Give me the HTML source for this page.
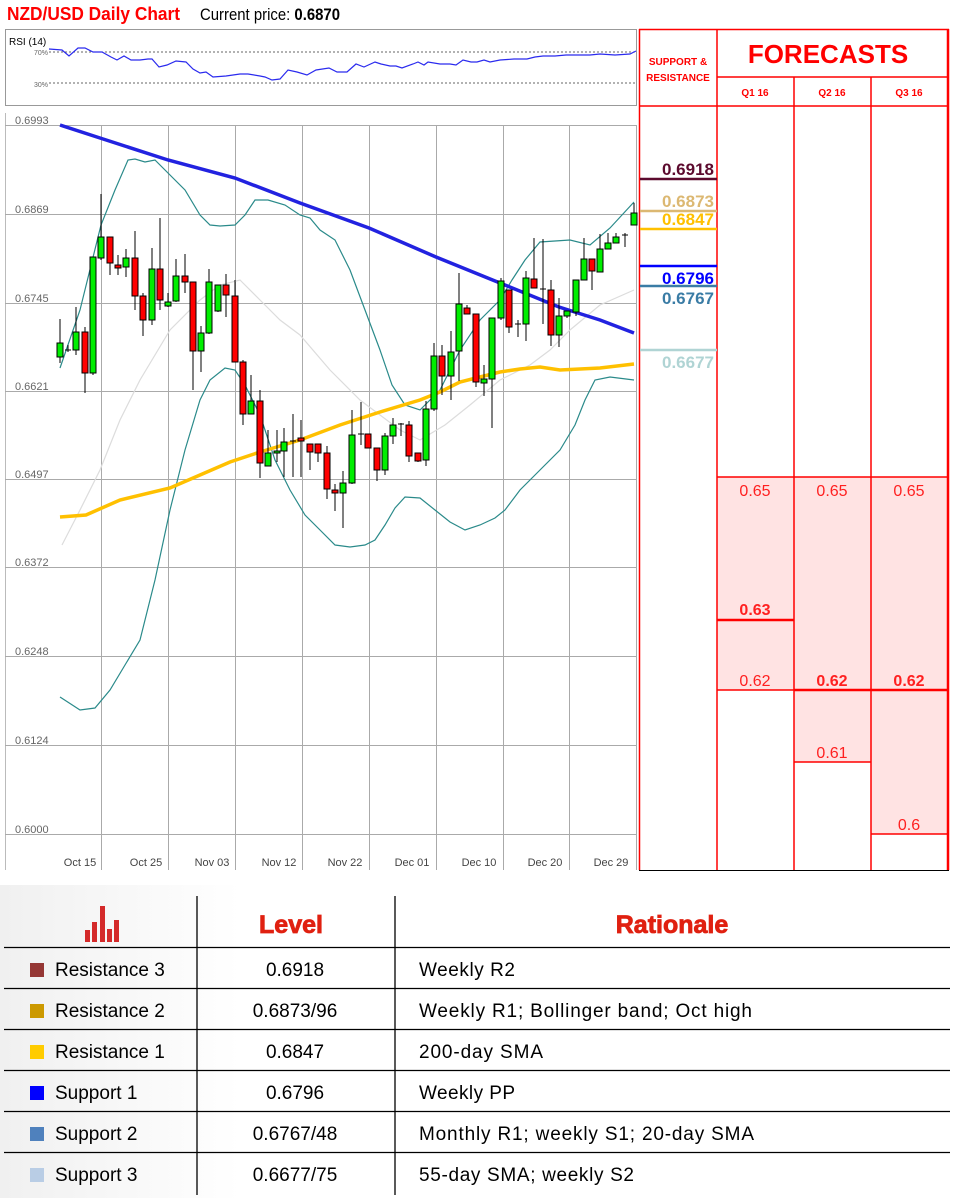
<!DOCTYPE html>
<html><head><meta charset="utf-8">
<style>
html,body{margin:0;padding:0;background:#fff;}
svg{display:block;font-family:"Liberation Sans",sans-serif;}
</style></head>
<body>
<svg width="960" height="1198" viewBox="0 0 960 1198" xmlns="http://www.w3.org/2000/svg">
<defs>
<linearGradient id="bg" x1="0" x2="1" y1="0" y2="0">
<stop offset="0" stop-color="#f0f0f0"/><stop offset="0.25" stop-color="#fff"/><stop offset="1" stop-color="#fff"/>
</linearGradient>
</defs>
<rect width="960" height="1198" fill="#fff"/>
<!-- Title -->
<text x="7" y="20" font-size="18" font-weight="bold" fill="#ff0000" textLength="173" lengthAdjust="spacingAndGlyphs">NZD/USD Daily Chart</text>
<text x="200" y="20" font-size="17" fill="#000" textLength="140" lengthAdjust="spacingAndGlyphs">Current price: <tspan font-weight="bold">0.6870</tspan></text>

<!-- RSI panel -->
<rect x="5.5" y="29.5" width="631" height="76" fill="#fff" stroke="#999"/>
<text x="9" y="45" font-size="10" fill="#000">RSI (14)</text>
<text x="34" y="55" font-size="7" fill="#666">70%</text>
<text x="34" y="87" font-size="7" fill="#666">30%</text>
<line x1="49" y1="52" x2="636" y2="52" stroke="#666" stroke-dasharray="2,2"/>
<line x1="49" y1="83" x2="636" y2="83" stroke="#666" stroke-dasharray="2,2"/>
<polyline fill="none" stroke="#2a2aee" stroke-width="1.2" points="49,49 62,50 69,56 78,48 85,48 93,52 102,52 111,57 117,60 124,56 131,60 140,60 148,59 152,59 159,67 167,65 176,61 186,62 193,69 200,73 206,72 213,77 226,76 240,74 248,74 260,76 265,77 272,80 280,79 288,70 297,72 307,75 316,70 329,68 337,72 347,72 356,64 364,67 375,62 381,64 390,66 396,66 402,68 413,64 418,62 424,65 428,62 440,64 450,64 456,65 463,60 471,62 477,62 484,60 490,62 500,60 514,59 527,59 535,57 543,56 555,56 566,55 576,55 590,55 600,54 615,55 630,54 636,51"/>

<!-- Main chart frame -->
<line x1="5.5" y1="113" x2="5.5" y2="870" stroke="#bbb"/>
<g stroke="#aaa" stroke-width="1">
<line x1="5" y1="125.5" x2="636" y2="125.5"/>
<line x1="5" y1="214.5" x2="636" y2="214.5"/>
<line x1="5" y1="303.5" x2="636" y2="303.5"/>
<line x1="5" y1="391.5" x2="636" y2="391.5"/>
<line x1="5" y1="479.5" x2="636" y2="479.5"/>
<line x1="5" y1="567.5" x2="636" y2="567.5"/>
<line x1="5" y1="656.5" x2="636" y2="656.5"/>
<line x1="5" y1="745.5" x2="636" y2="745.5"/>
<line x1="5" y1="834.5" x2="636" y2="834.5"/>
<line x1="101.5" y1="125" x2="101.5" y2="870"/>
<line x1="168.5" y1="125" x2="168.5" y2="870"/>
<line x1="235.5" y1="125" x2="235.5" y2="870"/>
<line x1="302.5" y1="125" x2="302.5" y2="870"/>
<line x1="369.5" y1="125" x2="369.5" y2="870"/>
<line x1="436.5" y1="125" x2="436.5" y2="870"/>
<line x1="503.5" y1="125" x2="503.5" y2="870"/>
<line x1="569.5" y1="125" x2="569.5" y2="870"/>
<line x1="636.5" y1="125" x2="636.5" y2="870"/>
</g>
<g font-size="11" fill="#666">
<text x="15" y="124">0.6993</text>
<text x="15" y="213">0.6869</text>
<text x="15" y="302">0.6745</text>
<text x="15" y="390">0.6621</text>
<text x="15" y="478">0.6497</text>
<text x="15" y="566">0.6372</text>
<text x="15" y="655">0.6248</text>
<text x="15" y="744">0.6124</text>
<text x="15" y="833">0.6000</text>
</g>
<g font-size="11" fill="#444" text-anchor="middle">
<text x="80" y="866">Oct 15</text>
<text x="146" y="866">Oct 25</text>
<text x="212" y="866">Nov 03</text>
<text x="279" y="866">Nov 12</text>
<text x="345" y="866">Nov 22</text>
<text x="412" y="866">Dec 01</text>
<text x="479" y="866">Dec 10</text>
<text x="545" y="866">Dec 20</text>
<text x="611" y="866">Dec 29</text>
</g>

<!-- Lines -->
<polyline fill="none" stroke="#dcdcdc" stroke-width="1.2" points="62,545 80,510 100,470 120,420 140,380 170,330 200,300 220,285 240,280 260,300 280,320 300,335 330,370 360,400 380,415 400,430 420,440 445,425 470,405 500,380 530,365 550,350 570,330 600,305 634,290"/>
<polyline fill="none" stroke="#2a8a8a" stroke-width="1.2" points="60,368 80,310 101,225 115,190 128,160 135,159 145,162 155,160 170,175 185,190 200,215 210,225 220,226 235,225 245,215 255,200 268,200 285,205 300,215 310,218 320,230 335,240 350,270 365,310 380,350 392,385 405,405 420,410 440,390 460,350 480,320 500,300 512,280 525,260 540,242 570,240 590,245 610,228 634,202"/>
<polyline fill="none" stroke="#2a8a8a" stroke-width="1.2" points="60,697 80,710 95,708 110,690 125,665 140,640 155,580 170,510 185,450 200,400 210,380 225,368 235,370 245,385 260,415 275,460 290,490 305,515 320,530 335,545 350,547 365,545 375,540 385,525 395,508 405,497 420,498 435,510 450,522 465,530 480,525 495,518 505,510 520,490 540,470 560,450 575,425 585,400 595,380 610,377 634,380"/>
<polyline fill="none" stroke="#ffc000" stroke-width="3.5" points="60,517 86,515 120,500 170,488 200,475 230,462 260,452 300,440 340,425 380,412 420,400 440,392 460,382 480,377 500,372 520,369 540,367 560,370 580,369 600,368 634,364"/>
<polyline fill="none" stroke="#2222e0" stroke-width="3.5" points="60,125 100,138 168,160 235,178 300,203 369,228 436,257 500,283 559,307 600,320 634,333"/>

<!-- Candles -->
<g stroke="#000" stroke-width="1">
<line x1="60" y1="319" x2="60" y2="363"/><rect x="57" y="343" width="6" height="14" fill="#00ee00"/>
<line x1="68" y1="345" x2="68" y2="352"/><line x1="65" y1="350" x2="71" y2="350"/>
<line x1="76" y1="307" x2="76" y2="355"/><rect x="73" y="332" width="6" height="18" fill="#00ee00"/>
<line x1="85" y1="327" x2="85" y2="393"/><rect x="82" y="332" width="6" height="41" fill="#ff0000"/>
<line x1="93" y1="257" x2="93" y2="375"/><rect x="90" y="257" width="6" height="116" fill="#00ee00"/>
<line x1="101" y1="194" x2="101" y2="260"/><rect x="98" y="237" width="6" height="21" fill="#00ee00"/>
<line x1="110" y1="237" x2="110" y2="275"/><rect x="107" y="237" width="6" height="26" fill="#ff0000"/>
<line x1="118" y1="255" x2="118" y2="275"/><rect x="115" y="265" width="6" height="3" fill="#ff0000"/>
<line x1="126" y1="249" x2="126" y2="277"/><rect x="123" y="258" width="6" height="9" fill="#00ee00"/>
<line x1="135" y1="231" x2="135" y2="310"/><rect x="132" y="258" width="6" height="38" fill="#ff0000"/>
<line x1="143" y1="293" x2="143" y2="336"/><rect x="140" y="296" width="6" height="24" fill="#ff0000"/>
<line x1="152" y1="248" x2="152" y2="325"/><rect x="149" y="269" width="6" height="51" fill="#00ee00"/>
<line x1="160" y1="218" x2="160" y2="310"/><rect x="157" y="269" width="6" height="31" fill="#ff0000"/>
<line x1="168" y1="293" x2="168" y2="307"/><rect x="165" y="302" width="6" height="4" fill="#00ee00"/>
<line x1="176" y1="259" x2="176" y2="302"/><rect x="173" y="276" width="6" height="25" fill="#00ee00"/>
<line x1="185" y1="254" x2="185" y2="293"/><rect x="182" y="276" width="6" height="6" fill="#ff0000"/>
<line x1="193" y1="282" x2="193" y2="390"/><rect x="190" y="282" width="6" height="69" fill="#ff0000"/>
<line x1="201" y1="326" x2="201" y2="372"/><rect x="198" y="333" width="6" height="18" fill="#00ee00"/>
<line x1="209" y1="269" x2="209" y2="334"/><rect x="206" y="282" width="6" height="51" fill="#00ee00"/>
<line x1="218" y1="285" x2="218" y2="312"/><rect x="215" y="285" width="6" height="26" fill="#00ee00"/>
<line x1="226" y1="274" x2="226" y2="317"/><rect x="223" y="285" width="6" height="10" fill="#ff0000"/>
<line x1="235" y1="280" x2="235" y2="362"/><rect x="232" y="296" width="6" height="66" fill="#ff0000"/>
<line x1="243" y1="360" x2="243" y2="425"/><rect x="240" y="362" width="6" height="52" fill="#ff0000"/>
<line x1="251" y1="375" x2="251" y2="414"/><rect x="248" y="401" width="6" height="13" fill="#00ee00"/>
<line x1="260" y1="390" x2="260" y2="478"/><rect x="257" y="401" width="6" height="62" fill="#ff0000"/>
<line x1="268" y1="430" x2="268" y2="466"/><rect x="265" y="453" width="6" height="13" fill="#00ee00"/>
<line x1="277" y1="430" x2="277" y2="462"/><rect x="274" y="451" width="6" height="2" fill="#00ee00"/>
<line x1="284" y1="428" x2="284" y2="477"/><rect x="281" y="442" width="6" height="9" fill="#00ee00"/>
<line x1="293" y1="414" x2="293" y2="477"/><line x1="290" y1="441" x2="296" y2="441"/>
<line x1="301" y1="420" x2="301" y2="477"/><rect x="298" y="438" width="6" height="3" fill="#ff0000"/>
<line x1="310" y1="444" x2="310" y2="470"/><rect x="307" y="444" width="6" height="8" fill="#ff0000"/>
<line x1="318" y1="444" x2="318" y2="462"/><rect x="315" y="444" width="6" height="9" fill="#ff0000"/>
<line x1="327" y1="446" x2="327" y2="499"/><rect x="324" y="453" width="6" height="36" fill="#ff0000"/>
<line x1="335" y1="484" x2="335" y2="511"/><rect x="332" y="490" width="6" height="3" fill="#ff0000"/>
<line x1="343" y1="471" x2="343" y2="528"/><rect x="340" y="483" width="6" height="10" fill="#00ee00"/>
<line x1="352" y1="410" x2="352" y2="484"/><rect x="349" y="435" width="6" height="48" fill="#00ee00"/>
<line x1="361" y1="402" x2="361" y2="445"/><line x1="358" y1="434" x2="364" y2="434"/>
<line x1="368" y1="434" x2="368" y2="448"/><rect x="365" y="434" width="6" height="14" fill="#ff0000"/>
<line x1="377" y1="448" x2="377" y2="481"/><rect x="374" y="448" width="6" height="22" fill="#ff0000"/>
<line x1="385" y1="433" x2="385" y2="475"/><rect x="382" y="436" width="6" height="34" fill="#00ee00"/>
<line x1="393" y1="418" x2="393" y2="444"/><rect x="390" y="425" width="6" height="11" fill="#00ee00"/>
<line x1="401" y1="423" x2="401" y2="436"/><line x1="398" y1="424" x2="404" y2="424"/>
<line x1="409" y1="421" x2="409" y2="462"/><rect x="406" y="425" width="6" height="31" fill="#ff0000"/>
<line x1="418" y1="453" x2="418" y2="462"/><rect x="415" y="453" width="6" height="8" fill="#ff0000"/>
<line x1="426" y1="401" x2="426" y2="466"/><rect x="423" y="409" width="6" height="51" fill="#00ee00"/>
<line x1="434" y1="343" x2="434" y2="411"/><rect x="431" y="356" width="6" height="53" fill="#00ee00"/>
<line x1="442" y1="345" x2="442" y2="395"/><rect x="439" y="356" width="6" height="20" fill="#ff0000"/>
<line x1="451" y1="331" x2="451" y2="400"/><rect x="448" y="352" width="6" height="24" fill="#00ee00"/>
<line x1="459" y1="273" x2="459" y2="381"/><rect x="456" y="304" width="6" height="47" fill="#00ee00"/>
<line x1="467" y1="305" x2="467" y2="314"/><rect x="464" y="308" width="6" height="6" fill="#ff0000"/>
<line x1="476" y1="314" x2="476" y2="387"/><rect x="473" y="314" width="6" height="68" fill="#ff0000"/>
<line x1="484" y1="365" x2="484" y2="396"/><rect x="481" y="379" width="6" height="4" fill="#00ee00"/>
<line x1="492" y1="318" x2="492" y2="428"/><rect x="489" y="318" width="6" height="61" fill="#00ee00"/>
<line x1="501" y1="278" x2="501" y2="320"/><rect x="498" y="281" width="6" height="37" fill="#00ee00"/>
<line x1="509" y1="290" x2="509" y2="333"/><rect x="506" y="290" width="6" height="37" fill="#ff0000"/>
<line x1="518" y1="320" x2="518" y2="337"/><line x1="515" y1="324" x2="521" y2="324"/>
<line x1="526" y1="271" x2="526" y2="341"/><rect x="523" y="278" width="6" height="46" fill="#00ee00"/>
<line x1="534" y1="238" x2="534" y2="288"/><rect x="531" y="279" width="6" height="9" fill="#ff0000"/>
<line x1="543" y1="239" x2="543" y2="324"/><line x1="540" y1="289" x2="546" y2="289"/>
<line x1="551" y1="280" x2="551" y2="346"/><rect x="548" y="290" width="6" height="45" fill="#ff0000"/>
<line x1="559" y1="298" x2="559" y2="347"/><rect x="556" y="316" width="6" height="19" fill="#00ee00"/>
<line x1="567" y1="311" x2="567" y2="318"/><rect x="564" y="311" width="6" height="5" fill="#00ee00"/>
<line x1="576" y1="280" x2="576" y2="316"/><rect x="573" y="280" width="6" height="32" fill="#00ee00"/>
<line x1="584" y1="238" x2="584" y2="280"/><rect x="581" y="259" width="6" height="21" fill="#00ee00"/>
<line x1="592" y1="259" x2="592" y2="290"/><rect x="589" y="259" width="6" height="12" fill="#ff0000"/>
<line x1="600" y1="234" x2="600" y2="272"/><rect x="597" y="249" width="6" height="23" fill="#00ee00"/>
<line x1="608" y1="233" x2="608" y2="249"/><rect x="605" y="243" width="6" height="6" fill="#00ee00"/>
<line x1="616" y1="233" x2="616" y2="243"/><rect x="613" y="237" width="6" height="6" fill="#00ee00"/>
<line x1="625" y1="233" x2="625" y2="247"/><line x1="622" y1="235" x2="628" y2="235"/>
<line x1="634" y1="203" x2="634" y2="225"/><rect x="631" y="213" width="6" height="12" fill="#00ee00"/>
</g>

<!-- Right panel -->
<g stroke="#ff0000" stroke-width="1.5" fill="none">
<rect x="717" y="477" width="77" height="213" fill="#ffe3e3" stroke="none"/>
<rect x="794" y="477" width="77" height="285" fill="#ffe3e3" stroke="none"/>
<rect x="871" y="477" width="77" height="357" fill="#ffe3e3" stroke="none"/>
<line x1="639" y1="29.5" x2="949" y2="29.5"/>
<line x1="639.5" y1="29" x2="639.5" y2="870"/>
<line x1="717" y1="29" x2="717" y2="870"/>
<line x1="794" y1="77" x2="794" y2="870"/>
<line x1="871" y1="77" x2="871" y2="870"/>
<line x1="948" y1="29" x2="948" y2="870" stroke-width="2.5"/>
<line x1="717" y1="77" x2="948" y2="77"/>
<line x1="639" y1="106" x2="948" y2="106"/>
<line x1="717" y1="477" x2="948" y2="477"/>
<line x1="717" y1="620" x2="794" y2="620" stroke-width="2.5"/>
<line x1="717" y1="690" x2="794" y2="690"/>
<line x1="794" y1="690" x2="948" y2="690" stroke-width="2.5"/>
<line x1="794" y1="762" x2="871" y2="762"/>
<line x1="871" y1="834" x2="948" y2="834"/>
</g>
<line x1="639" y1="870.5" x2="949" y2="870.5" stroke="#000"/>
<text x="678" y="65" font-size="10" font-weight="bold" fill="#ff0000" text-anchor="middle">SUPPORT &amp;</text>
<text x="678" y="81" font-size="10" font-weight="bold" fill="#ff0000" text-anchor="middle">RESISTANCE</text>
<text x="828" y="63" font-size="26" font-weight="bold" fill="#ff0000" text-anchor="middle">FORECASTS</text>
<g font-size="10" font-weight="bold" fill="#ff0000" text-anchor="middle">
<text x="755" y="96">Q1 16</text><text x="832" y="96">Q2 16</text><text x="909" y="96">Q3 16</text>
</g>
<line x1="640" y1="179" x2="717" y2="179" stroke="#5c0a2e" stroke-width="2.5"/>
<line x1="640" y1="211" x2="717" y2="211" stroke="#dcb872" stroke-width="2.5"/>
<line x1="640" y1="229" x2="717" y2="229" stroke="#ffc000" stroke-width="2.5"/>
<line x1="640" y1="266" x2="717" y2="266" stroke="#0000ff" stroke-width="2.5"/>
<line x1="640" y1="286" x2="717" y2="286" stroke="#3a7ca5" stroke-width="2.5"/>
<line x1="640" y1="350" x2="717" y2="350" stroke="#b0d4d4" stroke-width="2.5"/>
<g font-size="17" font-weight="bold" text-anchor="end">
<text x="714" y="175" fill="#5c0a2e">0.6918</text>
<text x="714" y="207" fill="#dcb872">0.6873</text>
<text x="714" y="225" fill="#ffc000">0.6847</text>
<text x="714" y="284" fill="#0000ff">0.6796</text>
<text x="714" y="304" fill="#3a7ca5">0.6767</text>
<text x="714" y="368" fill="#b0d4d4">0.6677</text>
</g>
<g font-size="16" fill="#ff2020" text-anchor="middle">
<text x="755" y="496">0.65</text><text x="832" y="496">0.65</text><text x="909" y="496">0.65</text>
<text x="755" y="615" font-weight="bold">0.63</text>
<text x="755" y="686">0.62</text>
<text x="832" y="686" font-weight="bold">0.62</text>
<text x="909" y="686" font-weight="bold">0.62</text>
<text x="832" y="758">0.61</text>
<text x="909" y="830">0.6</text>
</g>

<!-- Bottom table -->
<rect x="0" y="885" width="960" height="313" fill="url(#bg)"/>
<g stroke="#000" stroke-width="1.3">
<line x1="197" y1="896" x2="197" y2="1195"/>
<line x1="395" y1="896" x2="395" y2="1195"/>
<line x1="4" y1="947.5" x2="950" y2="947.5"/>
<line x1="4" y1="988.5" x2="950" y2="988.5"/>
<line x1="4" y1="1029.5" x2="950" y2="1029.5"/>
<line x1="4" y1="1070.5" x2="950" y2="1070.5"/>
<line x1="4" y1="1111.5" x2="950" y2="1111.5"/>
<line x1="4" y1="1152.5" x2="950" y2="1152.5"/>
</g>
<g fill="#d42a2a">
<rect x="85" y="930" width="5" height="12"/>
<rect x="92" y="922" width="5" height="20"/>
<rect x="100" y="906" width="5" height="36"/>
<rect x="107" y="929" width="5" height="13"/>
<rect x="114" y="920" width="5" height="22"/>
</g>
<text x="291" y="933" font-size="25" font-weight="900" fill="#e02010" text-anchor="middle" stroke="#e02010" stroke-width="0.8">Level</text>
<text x="672" y="933" font-size="25" font-weight="900" fill="#e02010" text-anchor="middle" stroke="#e02010" stroke-width="0.8">Rationale</text>
<rect x="30" y="963" width="14" height="14" fill="#953735"/>
<rect x="30" y="1004" width="14" height="14" fill="#cc9900"/>
<rect x="30" y="1045" width="14" height="14" fill="#ffcc00"/>
<rect x="30" y="1086" width="14" height="14" fill="#0000ff"/>
<rect x="30" y="1127" width="14" height="14" fill="#4f81bd"/>
<rect x="30" y="1168" width="14" height="14" fill="#b9cde5"/>
<g font-size="19" fill="#000">
<text x="55" y="976">Resistance 3</text>
<text x="55" y="1017">Resistance 2</text>
<text x="55" y="1058">Resistance 1</text>
<text x="55" y="1099">Support 1</text>
<text x="55" y="1140">Support 2</text>
<text x="55" y="1181">Support 3</text>
</g>
<g font-size="19" fill="#000" text-anchor="middle">
<text x="295" y="976">0.6918</text>
<text x="295" y="1017">0.6873/96</text>
<text x="295" y="1058">0.6847</text>
<text x="295" y="1099">0.6796</text>
<text x="295" y="1140">0.6767/48</text>
<text x="295" y="1181">0.6677/75</text>
</g>
<g font-size="19" fill="#000">
<text x="419" y="976" textLength="96">Weekly R2</text>
<text x="419" y="1017" textLength="333">Weekly R1; Bollinger band; Oct high</text>
<text x="419" y="1058" textLength="124">200-day SMA</text>
<text x="419" y="1099" textLength="96">Weekly PP</text>
<text x="419" y="1140" textLength="335">Monthly R1; weekly S1; 20-day SMA</text>
<text x="419" y="1181" textLength="215">55-day SMA; weekly S2</text>
</g>
</svg>
</body></html>
